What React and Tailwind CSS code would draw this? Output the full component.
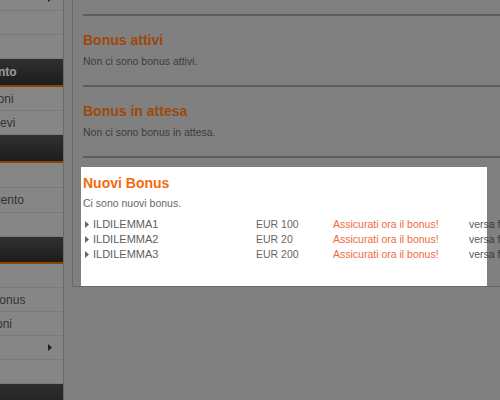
import React from 'react'

const sideMenu = [
  { label: 'Profilo', arrow: true, h: 'h-[24px]' },
  { label: 'Home', h: 'h-[24px]' },
  { label: 'Saldo', h: 'h-[24px]' },
  { header: 'Il tuo conto', h: 'h-[28px]' },
  { label: 'Transazioni', h: 'h-[24px]' },
  { label: 'Miei prelievi', h: 'h-[24px]' },
  { header: 'Cassa', h: 'h-[28px]' },
  { label: 'Depositi', h: 'h-[25px]' },
  { label: 'Il versamento', h: 'h-[25px]' },
  { label: 'Limiti', h: 'h-[24px]' },
  { header: 'Bonus', h: 'h-[27px]' },
  { label: 'Regole', h: 'h-[24px]' },
  { label: 'Storico bonus', h: 'h-[24px]' },
  { label: 'Promozioni', h: 'h-[24px]' },
  { label: 'Altro', arrow: true, h: 'h-[24px]' },
  { label: 'Aiuto', h: 'h-[24px]' },
]

const newBonuses = [
  { code: 'ILDILEMMA1', amount: 'EUR 100' },
  { code: 'ILDILEMMA2', amount: 'EUR 20' },
  { code: 'ILDILEMMA3', amount: 'EUR 200' },
]

function Caret({ className }) {
  return (
    <svg viewBox="0 0 4 7" className={className}>
      <polygon points="0,0 4,3.5 0,7" fill="currentColor" />
    </svg>
  )
}

function Sidebar() {
  return (
    <aside className="w-[124px] -ml-[60px] shrink-0 h-full flex flex-col bg-[#cecece] border-r border-[#a2a2a2]">
      <div className="-mt-[13px] flex flex-col">
        {sideMenu.map((item, i) =>
          item.header ? (
            <div
              key={i}
              className={`${item.h} flex items-center pl-3 bg-linear-to-b from-[#4c4c4c] to-[#2c2c2c] border-b-2 border-[#d86a08] text-[12px] font-bold text-[#ececec] whitespace-nowrap`}
            >
              {item.header}
            </div>
          ) : (
            <div
              key={i}
              className={`${item.h} flex items-center justify-between pl-3 pr-[11px] border-b border-[#bababa] text-[12px] text-[#4f4f4f] whitespace-nowrap`}
            >
              <span>{item.label}</span>
              {item.arrow && <Caret className="w-[4px] h-[7px] text-[#333]" />}
            </div>
          )
        )}
      </div>
      <div className="flex-1" />
      <div className="h-[16px] bg-linear-to-b from-[#484848] to-[#3a3a3a]" />
    </aside>
  )
}

export default function App() {
  return (
    <div className="relative flex w-[500px] h-[400px] overflow-hidden bg-[#c5c5c5] font-['Liberation_Sans',Arial,sans-serif]">
      <Sidebar />

      <div className="w-[8px] shrink-0" />

      <main className="flex-1 self-start border-l border-b border-[#a0a0a0] pl-[10px]">
        <div className="h-[16px] border-b-2 border-[#8f8f8f]" />

        <section className="pt-[14px] pb-[17px] border-b-2 border-[#8f8f8f]">
          <h2 className="text-[14px] leading-[20px] font-bold text-[#f0700f]">Bonus attivi</h2>
          <p className="mt-[4px] text-[10.5px] leading-[14px] text-[#5e5e5e]">Non ci sono bonus attivi.</p>
        </section>

        <section className="pt-[14px] pb-[17px] border-b-2 border-[#8f8f8f]">
          <h2 className="text-[14px] leading-[20px] font-bold text-[#f0700f]">Bonus in attesa</h2>
          <p className="mt-[4px] text-[10.5px] leading-[14px] text-[#5e5e5e]">Non ci sono bonus in attesa.</p>
        </section>

        <section className="relative mt-[9px] -ml-[2px] w-[406px] bg-white pl-[2px] pt-[6px] pb-[24px]">
          <h2 className="text-[14px] leading-[20px] font-bold text-[#f26c0d]">Nuovi Bonus</h2>
          <p className="mt-[3px] text-[10.5px] leading-[14px] text-[#666]">Ci sono nuovi bonus.</p>

          <div className="mt-[7px] w-max pl-[2px] grid grid-cols-[171px_77px_136px_max-content] leading-[15px] text-[10.5px] text-[#666]">
            {newBonuses.map((b) => (
              <React.Fragment key={b.code}>
                <div className="flex items-center gap-[4px]">
                  <Caret className="w-[4px] h-[7px] text-[#666]" />
                  <span className="text-[11px] text-[#606060]">{b.code}</span>
                </div>
                <div className="text-[#666]">{b.amount}</div>
                <div className="text-[#f06a3c]">Assicurati ora il bonus!</div>
                <div className="text-[#5a5a5a]">versa fondi</div>
              </React.Fragment>
            ))}
          </div>

          <div className="absolute inset-0 z-20 pointer-events-none shadow-[0_0_0_2000px_rgba(0,0,0,0.35)]" />
        </section>
      </main>
    </div>
  )
}
